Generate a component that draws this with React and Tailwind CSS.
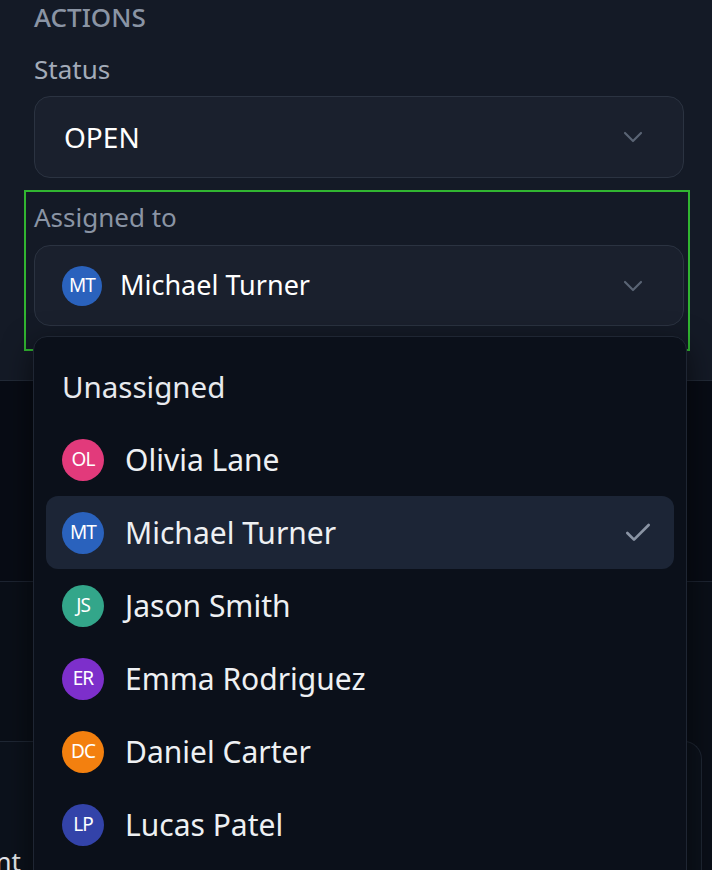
import { Check, ChevronDown } from 'lucide-react'

const people = [
  { id: 'ol', initials: 'OL', name: 'Olivia Lane', color: 'bg-[#e23a7b]' },
  { id: 'mt', initials: 'MT', name: 'Michael Turner', color: 'bg-[#2a62bd]' },
  { id: 'js', initials: 'JS', name: 'Jason Smith', color: 'bg-[#33a68a]' },
  { id: 'er', initials: 'ER', name: 'Emma Rodriguez', color: 'bg-[#7d2fcb]' },
  { id: 'dc', initials: 'DC', name: 'Daniel Carter', color: 'bg-[#f3800f]' },
  { id: 'lp', initials: 'LP', name: 'Lucas Patel', color: 'bg-[#3343a9]' },
]

function Avatar({ p, size = 'w-[42px] h-[42px]' }) {
  return (
    <span className={`${size} ${p.color} shrink-0 rounded-full flex items-center justify-center text-white text-[19px] tracking-[-0.05em]`}>
      {p.initials}
    </span>
  )
}

export default function App() {
  const selected = 'mt'
  const current = people.find(p => p.id === selected)

  return (
    <div className="relative w-[712px] h-[870px] overflow-hidden bg-[#0a0f18] font-['Noto_Sans',sans-serif]">
      {/* actions panel */}
      <div className="h-[381px] bg-[#141a26] border-b border-[#222a37] pl-[34px] pr-[28px]">
        <div className="pt-[1px] text-[26px] leading-[32px] font-medium text-[#8a94a4]">ACTIONS</div>
        <div className="mt-[19px] text-[26px] leading-[34px] text-[#a3abb8]">Status</div>
        <div className="mt-[10px] h-[82px] rounded-[16px] border border-[#2b3341] bg-[#1a202d] flex items-center pl-[29px] pr-[34px]">
          <span className="flex-1 text-[28px] text-white">OPEN</span>
          <ChevronDown className="w-[32px] h-[32px] text-[#5a6474]" strokeWidth={1.6} />
        </div>

        <div className="mt-[12px] -ml-[10px] w-[666px] h-[161px] border-2 border-[#31b531] pl-[8px] pr-[4px] pt-[8px]">
          <div className="text-[26px] leading-[34px] text-[#8a94a4]">Assigned to</div>
          <div className="mt-[11px] h-[81px] rounded-[16px] border border-[#2b3341] bg-[#1a202d] flex items-center pl-[27px] pr-[34px]">
            <Avatar p={current} size="w-[40px] h-[40px]" />
            <span className="ml-[18px] flex-1 text-[27px] text-white">{current.name}</span>
            <ChevronDown className="w-[32px] h-[32px] text-[#5a6474]" strokeWidth={1.6} />
          </div>
        </div>
      </div>

      {/* content behind the menu */}
      <div className="h-[201px] bg-[#080c15] border-b border-[#1d2431]" />
      <div className="h-[159px]" />
      <div className="mr-[10px] -ml-[120px] h-[200px] rounded-tr-[18px] border-t border-r border-[#1f2734] bg-[#0c121c] pt-[100px] pl-[20px]">
        <span className="text-[26px] text-[#e5e7eb]">Comment</span>
      </div>

      {/* dropdown */}
      <div className="absolute left-[33px] top-[336px] w-[654px] h-[560px] rounded-[14px] border border-[#1f2633] bg-[#0b101a] shadow-[0_10px_30px_rgba(0,0,0,0.6)] px-[12px] pt-[14px]">
        <div className="h-[72px] flex items-center pl-[16px] text-[29.5px] text-[#e8eaee]">Unassigned</div>
        {people.map(p => (
          <div
            key={p.id}
            className={`h-[73px] flex items-center pl-[16px] pr-[20px] rounded-[12px] ${p.id === selected ? 'bg-[#1c2536]' : ''}`}
          >
            <Avatar p={p} />
            <span className="ml-[21px] flex-1 text-[30px] text-[#eef0f3]">{p.name}</span>
            {p.id === selected && <Check className="w-[32px] h-[32px] text-[#8a94a4]" strokeWidth={2} />}
          </div>
        ))}
      </div>
    </div>
  )
}
